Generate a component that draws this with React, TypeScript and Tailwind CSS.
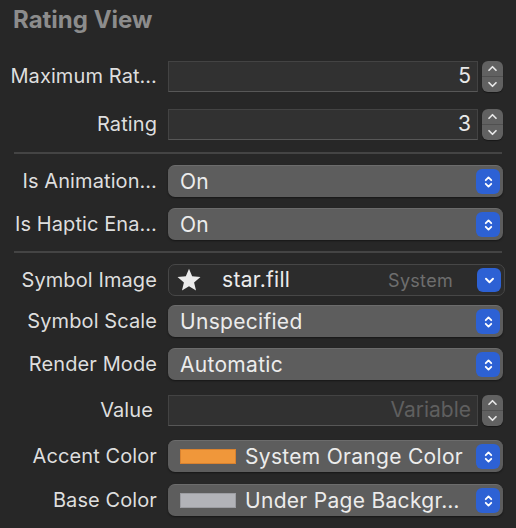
import React from "react";

const font = { fontFamily: "Inter, 'Noto Sans', sans-serif" };

function UpDown({ className = "" }: { className?: string }) {
  return (
    <svg viewBox="0 0 12 16" className={className} fill="none" stroke="currentColor" strokeWidth="2" strokeLinecap="round" strokeLinejoin="round">
      <path d="M3 6 L6 3 L9 6" />
      <path d="M3 10 L6 13 L9 10" />
    </svg>
  );
}

function Stepper() {
  return (
    <div className="ml-[4px] flex h-[31px] w-[21px] flex-col overflow-hidden rounded-[6px] bg-[#616161] text-[#e6e6e6] shadow-[0_1px_1px_rgba(0,0,0,0.4)]">
      <div className="flex flex-1 items-center justify-center border-b border-[#505050]">
        <svg viewBox="0 0 12 8" className="h-[7px] w-[11px]" fill="none" stroke="currentColor" strokeWidth="2" strokeLinecap="round" strokeLinejoin="round">
          <path d="M2 6 L6 2 L10 6" />
        </svg>
      </div>
      <div className="flex flex-1 items-center justify-center">
        <svg viewBox="0 0 12 8" className="h-[7px] w-[11px]" fill="none" stroke="currentColor" strokeWidth="2" strokeLinecap="round" strokeLinejoin="round">
          <path d="M2 2 L6 6 L10 2" />
        </svg>
      </div>
    </div>
  );
}

function Label({ text, pr = 0 }: { text: string; pr?: number }) {
  return (
    <div className={`w-[157px] shrink-0 whitespace-nowrap text-right text-[20px] tracking-[0.1px] text-[#dedede] ${pr ? "pr-[4px]" : ""}`}>
      {text}
    </div>
  );
}

function NumberField({ value, placeholder }: { value?: string; placeholder?: string }) {
  return (
    <div className="ml-[11px] flex items-center">
      <div className="flex h-[31px] w-[310px] items-center justify-end border border-[#434343] border-b-[#575757] bg-[#313131] pr-[6px] text-[21px]">
        {value ? <span className="text-[#e8e8e8]">{value}</span> : <span className="text-[#5f5f5f]">{placeholder}</span>}
      </div>
      <Stepper />
    </div>
  );
}

function Popup({ children }: { children: React.ReactNode }) {
  return (
    <div className="ml-[11px] flex h-[32px] w-[335px] items-center rounded-[7px] border-t border-[#6c6c6c] bg-[#5d5d5d] pl-[12px] pr-[3px] text-[21px] tracking-[0.3px] text-[#ececec] shadow-[0_1px_2px_rgba(0,0,0,0.45)]">
      <div className="flex flex-1 items-center overflow-hidden whitespace-nowrap">{children}</div>
      <div className="flex h-[25px] w-[24px] shrink-0 items-center justify-center rounded-[6px] bg-[#2d61d4] text-white">
        <UpDown className="h-[16px] w-[11px]" />
      </div>
    </div>
  );
}

function Row({ mt, children }: { mt: string; children: React.ReactNode }) {
  return <div className={`flex h-[32px] items-center ${mt}`}>{children}</div>;
}

function Separator({ mt }: { mt: string }) {
  return <div className={`ml-[14px] h-[2px] w-[488px] bg-[#444444] ${mt}`} />;
}

export default function App() {
  return (
    <div className="h-[528px] w-[516px] overflow-hidden bg-[#272727]" style={font}>
      <div className="h-[60px] pl-[13px] pt-[6px] text-[24px] font-bold leading-[28px] text-[#8c8c8c]">Rating View</div>

      <Row mt="mt-0">
        <Label text="Maximum Rat…" />
        <NumberField value="5" />
      </Row>
      <Row mt="mt-[16px]">
        <Label text="Rating" />
        <NumberField value="3" />
      </Row>

      <Separator mt="mt-[12px]" />

      <Row mt="mt-[11px]">
        <Label text="Is Animation…" />
        <Popup>On</Popup>
      </Row>
      <Row mt="mt-[11px]">
        <Label text="Is Haptic Ena…" />
        <Popup>On</Popup>
      </Row>

      <Separator mt="mt-[11px]" />

      <Row mt="mt-[11px]">
        <Label text="Symbol Image" />
        <div className="ml-[11px] flex h-[32px] w-[337px] items-center rounded-[7px] border border-[#474747] bg-[#2c2c2c] pl-[7px] pr-[3px] text-[21px] tracking-[0.3px]">
          <svg viewBox="0 0 24 24" className="h-[26px] w-[26px]" fill="#ebebeb">
            <path d="M12 1.5 L14.9 8.6 L22.6 9.2 L16.7 14.2 L18.5 21.8 L12 17.7 L5.5 21.8 L7.3 14.2 L1.4 9.2 L9.1 8.6 Z" />
          </svg>
          <span className="ml-[20px] text-[#ececec]">star.fill</span>
          <span className="ml-auto mr-[24px] text-[18px] text-[#6e6e6e]">System</span>
          <div className="flex h-[24px] w-[24px] items-center justify-center rounded-[6px] bg-[#2d61d4] text-white">
            <svg viewBox="0 0 12 8" className="h-[7px] w-[11px]" fill="none" stroke="currentColor" strokeWidth="2.2" strokeLinecap="round" strokeLinejoin="round">
              <path d="M2 2 L6 6 L10 2" />
            </svg>
          </div>
        </div>
      </Row>
      <Row mt="mt-[9px]">
        <Label text="Symbol Scale" />
        <Popup>Unspecified</Popup>
      </Row>
      <Row mt="mt-[11px]">
        <Label text="Render Mode" />
        <Popup>Automatic</Popup>
      </Row>
      <Row mt="mt-[14px]">
        <Label text="Value" pr={1} />
        <NumberField placeholder="Variable" />
      </Row>
      <Row mt="mt-[14px]">
        <Label text="Accent Color" />
        <Popup>
          <span className="h-[15px] w-[56px] shrink-0 border border-[#d9822f] bg-[#f0973a]" />
          <span className="ml-[9px]">System Orange Color</span>
        </Popup>
      </Row>
      <Row mt="mt-[12px]">
        <Label text="Base Color" />
        <Popup>
          <span className="h-[15px] w-[56px] shrink-0 border border-[#9c9da2] bg-[#b2b3b8]" />
          <span className="ml-[9px]">Under Page Backgr…</span>
        </Popup>
      </Row>
    </div>
  );
}
